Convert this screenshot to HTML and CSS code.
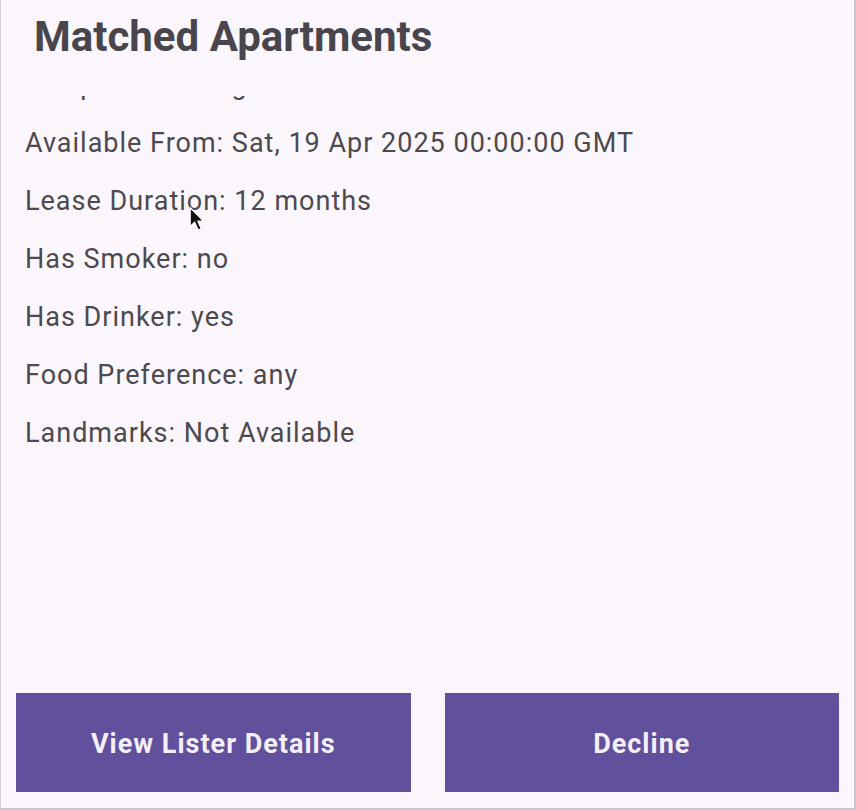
FILE: index.html
```html
<!DOCTYPE html>
<html lang="en">
<head>
<meta charset="utf-8">
<title>Matched Apartments</title>
<link rel="stylesheet" href="styles.css">
</head>
<body>
<div class="screen">
  <header class="header">
    <h1 class="title">Matched Apartments</h1>
  </header>
  <div class="list">
    <div class="list-inner">
      <p class="row">Sleep Habits: Night Owl</p>
      <p class="row">Available From: Sat, 19 Apr 2025 00:00:00 GMT</p>
      <p class="row">Lease Duration: 12 months</p>
      <p class="row">Has Smoker: no</p>
      <p class="row">Has Drinker: yes</p>
      <p class="row">Food Preference: any</p>
      <p class="row">Landmarks: Not Available</p>
    </div>
  </div>
  <div class="actions">
    <button class="btn">View Lister Details</button>
    <button class="btn">Decline</button>
  </div>
  <svg class="cursor" width="18" height="28" viewBox="0 0 16 24" aria-hidden="true">
    <path d="M1 1 L1 18 L5 14 L8 21 L11 20 L8 13 L13 13 Z" fill="#111" stroke="#fff" stroke-width="1.2" stroke-linejoin="round"/>
  </svg>
</div>
</body>
</html>
```
FILE: styles.css
```css
* { box-sizing: border-box; }
html, body {
  margin: 0;
  padding: 0;
  background: #fbf6fb;
}
.screen {
  position: relative;
  width: 856px;
  height: 810px;
  display: flex;
  flex-direction: column;
  border-left: 1px solid #d4d0d6;
  border-right: 2px solid #c9c5cb;
  border-bottom: 2px solid #c9c5cb;
  font-family: Roboto, "Noto Sans", sans-serif;
  overflow: hidden;
}
.header {
  height: 96px;
  padding-left: 33px;
  flex: none;
}
.title {
  margin: 0;
  font-size: 42px;
  font-weight: 700;
  color: #48464c;
  line-height: 74px;
}
.list {
  flex: 1;
  overflow: hidden;
  padding-left: 24px;
}
.list-inner {
  margin-top: -40px;
}
.row {
  margin: 0;
  font-size: 27px;
  letter-spacing: 1px;
  line-height: 58px;
  color: #4c4a4f;
  white-space: nowrap;
}
.actions {
  flex: none;
  display: flex;
  gap: 34px;
  padding: 0 15px 16px 15px;
}
.btn {
  flex: 1;
  height: 99px;
  border: none;
  border-radius: 0;
  background: #61509b;
  color: #f4eef7;
  font-family: Roboto, "Noto Sans", sans-serif;
  font-size: 27px;
  letter-spacing: 1px;
  font-weight: 700;
  padding: 3px 0 0 0;
}
.cursor {
  position: absolute;
  left: 188px;
  top: 206px;
}
```
